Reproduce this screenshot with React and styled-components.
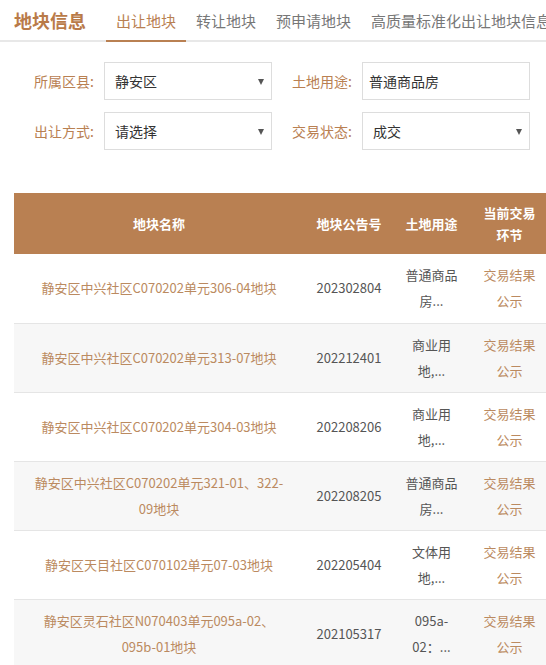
import React from "react";
import styled, { createGlobalStyle } from "styled-components";

const Global = createGlobalStyle`
  html, body {
    margin: 0;
    padding: 0;
    background: #fff;
    overflow: hidden;
  }
  body {
    font-family: "Microsoft YaHei", "Noto Sans CJK SC", "Noto Sans", sans-serif;
    color: #333;
  }
  * { box-sizing: border-box; }
`;

const BRAND = "#b98052";
const LINK = "#bb8a60";

const Page = styled.div`
  width: 546px;
  overflow: hidden;
`;

const TopBar = styled.div`
  display: flex;
  align-items: stretch;
  height: 42px;
  border-bottom: 2px solid #e8e8e8;
  white-space: nowrap;
`;

const Title = styled.div`
  display: flex;
  align-items: center;
  padding-left: 14px;
  margin-right: 20px;
  font-size: 18px;
  font-weight: 700;
  color: #b97a48;
  line-height: 1;
`;

const Tab = styled.div`
  display: flex;
  align-items: center;
  padding: 0 10px;
  font-size: 15px;
  line-height: 1;
  color: ${(p) => (p.$active ? BRAND : "#777")};
  border-bottom: 2px solid ${(p) => (p.$active ? BRAND : "transparent")};
  margin-bottom: -2px;
  flex-shrink: 0;
`;

const Filters = styled.div`
  display: flex;
  flex-direction: column;
  gap: 12px;
  padding: 20px 0 0 34px;
`;

const FilterRow = styled.div`
  display: flex;
  gap: 20px;
`;

const Field = styled.div`
  display: flex;
  align-items: center;
`;

const Label = styled.span`
  width: 70px;
  font-size: 14px;
  color: ${BRAND};
  line-height: 1;
`;

const Box = styled.div`
  position: relative;
  width: 168px;
  height: 38px;
  border: 1px solid #ddd;
  display: flex;
  align-items: center;
  padding-left: ${(p) => (p.$input ? "6px" : "10px")};
  font-size: 14px;
  color: #333;
  line-height: 1;
  background: #fff;
`;

const Caret = styled.span`
  position: absolute;
  right: 7px;
  top: 50%;
  margin-top: -2px;
  width: 0;
  height: 0;
  border-left: 3.5px solid transparent;
  border-right: 3.5px solid transparent;
  border-top: 6px solid #555;
`;

const TableWrap = styled.div`
  margin-top: 43px;
  padding-left: 14px;
`;

const Table = styled.table`
  width: 536px;
  table-layout: fixed;
  border-collapse: collapse;
  font-size: 13px;
`;

const HeadCell = styled.th`
  background: ${BRAND};
  color: #fff;
  font-weight: 700;
  height: 61px;
  line-height: 22px;
  padding: 0 10px;
  text-align: center;
  vertical-align: middle;
`;

const Row = styled.tr`
  background: ${(p) => (p.$alt ? "#f7f7f7" : "#fff")};
  border-bottom: 1px solid #e5e5e5;
`;

const Cell = styled.td`
  height: 69px;
  padding: 8px ${(p) => (p.$pad ? p.$pad : "10px")};
  line-height: 26px;
  text-align: center;
  vertical-align: middle;
  color: ${(p) => (p.$link ? LINK : "#555")};
  word-break: normal;
  overflow-wrap: break-word;
`;

const rows = [
  { name: "静安区中兴社区C070202单元306-04地块", no: "202302804", use: "普通商品房...", stage: "交易结果公示" },
  { name: "静安区中兴社区C070202单元313-07地块", no: "202212401", use: "商业用地,...", stage: "交易结果公示" },
  { name: "静安区中兴社区C070202单元304-03地块", no: "202208206", use: "商业用地,...", stage: "交易结果公示" },
  { name: "静安区中兴社区C070202单元321-01、322-09地块", no: "202208205", use: "普通商品房...", stage: "交易结果公示" },
  { name: "静安区天目社区C070102单元07-03地块", no: "202205404", use: "文体用地,...", stage: "交易结果公示" },
  { name: "静安区灵石社区N070403单元095a-02、095b-01地块", no: "202105317", use: "095a-02：...", stage: "交易结果公示" },
];

export default function App() {
  return (
    <Page>
      <Global />
      <TopBar>
        <Title>地块信息</Title>
        <Tab $active>出让地块</Tab>
        <Tab>转让地块</Tab>
        <Tab>预申请地块</Tab>
        <Tab>高质量标准化出让地块信息</Tab>
      </TopBar>

      <Filters>
        <FilterRow>
          <Field>
            <Label>所属区县:</Label>
            <Box>
              静安区
              <Caret />
            </Box>
          </Field>
          <Field>
            <Label>土地用途:</Label>
            <Box $input>普通商品房</Box>
          </Field>
        </FilterRow>
        <FilterRow>
          <Field>
            <Label>出让方式:</Label>
            <Box>
              请选择
              <Caret />
            </Box>
          </Field>
          <Field>
            <Label>交易状态:</Label>
            <Box>
              成交
              <Caret />
            </Box>
          </Field>
        </FilterRow>
      </Filters>

      <TableWrap>
        <Table>
          <colgroup>
            <col style={{ width: 290 }} />
            <col style={{ width: 90 }} />
            <col style={{ width: 75 }} />
            <col style={{ width: 81 }} />
          </colgroup>
          <thead>
            <tr>
              <HeadCell>地块名称</HeadCell>
              <HeadCell>地块公告号</HeadCell>
              <HeadCell>土地用途</HeadCell>
              <HeadCell>当前交易环节</HeadCell>
            </tr>
          </thead>
          <tbody>
            {rows.map((r, i) => (
              <Row key={i} $alt={i % 2 === 1}>
                <Cell $link $pad="15px">{r.name}</Cell>
                <Cell $pad="4px">{r.no}</Cell>
                <Cell>{r.use}</Cell>
                <Cell $link>{r.stage}</Cell>
              </Row>
            ))}
          </tbody>
        </Table>
      </TableWrap>
    </Page>
  );
}
